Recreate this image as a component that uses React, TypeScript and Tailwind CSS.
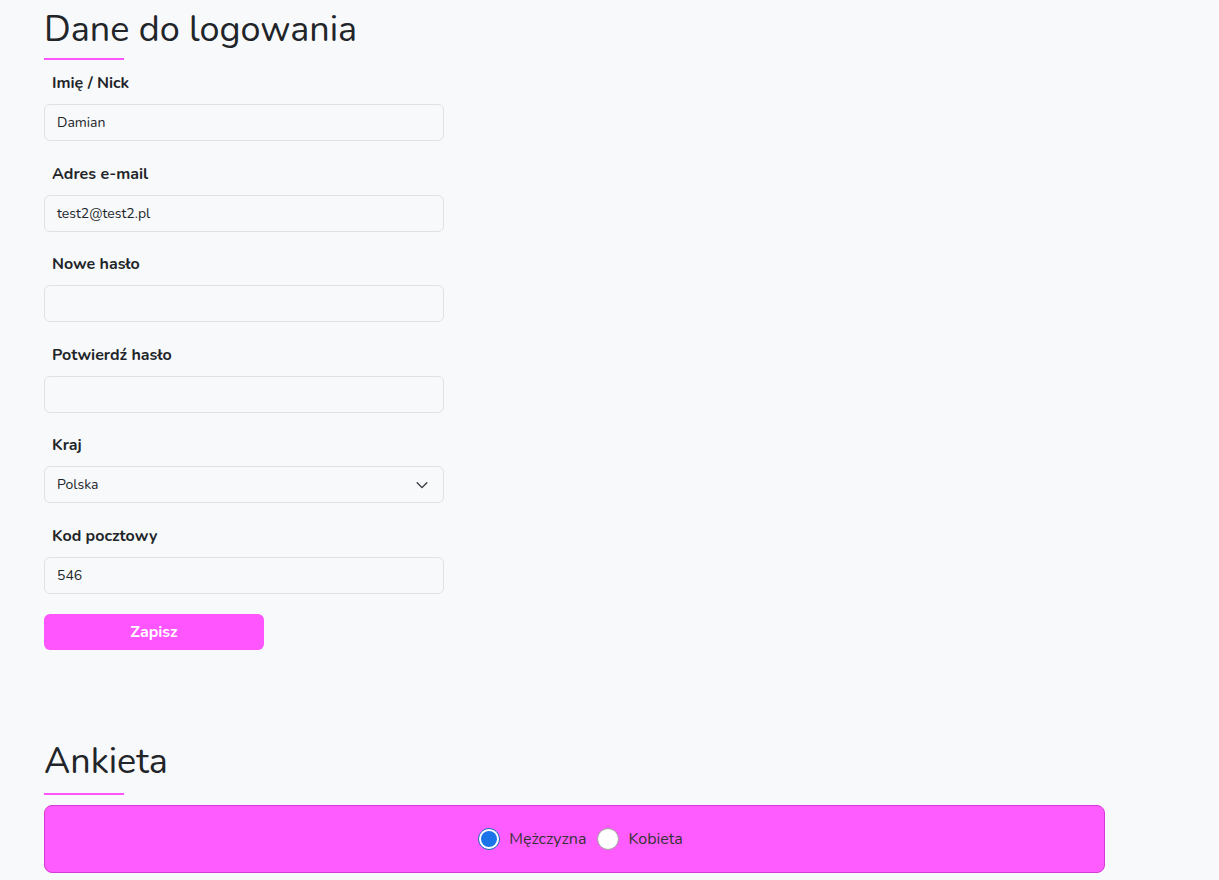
import React from "react";

const font = { fontFamily: "Nunito, Lato, 'Noto Sans', sans-serif" };

function Field({ label, value, select }: { label: string; value?: string; select?: boolean }) {
  return (
    <div className="mb-[19.6px]">
      <div className="pl-[8px] pt-[1px] text-[16px] leading-[24px] font-bold text-[#212529]">{label}</div>
      <div className="mt-[9px] flex h-[37px] w-[400px] items-center justify-between rounded-[6px] border border-[#dee2e6] bg-[#f8f9fa] px-[12px] text-[14px] text-[#212529]">
        <span>{value}</span>
        {select && (
          <svg width="14" height="14" viewBox="0 0 16 16" fill="none" stroke="#343a40" strokeWidth="1.6" strokeLinecap="round" strokeLinejoin="round" className="mr-[2px]">
            <path d="M2.5 5.5 8 11l5.5-5.5" />
          </svg>
        )}
      </div>
    </div>
  );
}

export default function App() {
  return (
    <div className="min-h-[880px] bg-[#f8f9fa] text-[#212529]" style={font}>
      <div className="pl-[44px] pr-[114px]">
        <h1 className="pt-[7px] text-[36px] leading-[46px] font-normal text-[#212529]">Dane do logowania</h1>
        <div className="mt-[5px] h-[2px] w-[80px] bg-[#ff55ff]" />
        <div className="mt-[10px]">
          <Field label="Imię / Nick" value="Damian" />
          <Field label="Adres e-mail" value="test2@test2.pl" />
          <Field label="Nowe hasło" />
          <Field label="Potwierdź hasło" />
          <Field label="Kraj" value="Polska" select />
          <Field label="Kod pocztowy" value="546" />
        </div>
        <button className="h-[36px] w-[220px] rounded-[6px] bg-[#ff55ff] text-[16px] font-bold text-white">Zapisz</button>

        <h2 className="mt-[89px] text-[36px] leading-[46px] font-normal text-[#212529]">Ankieta</h2>
        <div className="mt-[8px] h-[2px] w-[80px] bg-[#ff55ff]" />
        <div className="mt-[10px] flex h-[68px] items-center justify-center rounded-[8px] border border-[#d63ad6] bg-[#ff5cff] pl-[12px]">
          <label className="flex items-center text-[16px] text-[#333]">
            <span className="flex h-[22px] w-[22px] items-center justify-center rounded-full border-[1.5px] border-[#1565c0] bg-white">
              <span className="h-[16px] w-[16px] rounded-full bg-[#1a73e8]" />
            </span>
            <span className="ml-[9px]">Mężczyzna</span>
          </label>
          <label className="ml-[11px] flex items-center text-[16px] text-[#333]">
            <span className="h-[22px] w-[22px] rounded-full border-[1.5px] border-[#9e9e9e] bg-white" />
            <span className="ml-[9px]">Kobieta</span>
          </label>
        </div>
      </div>
    </div>
  );
}
